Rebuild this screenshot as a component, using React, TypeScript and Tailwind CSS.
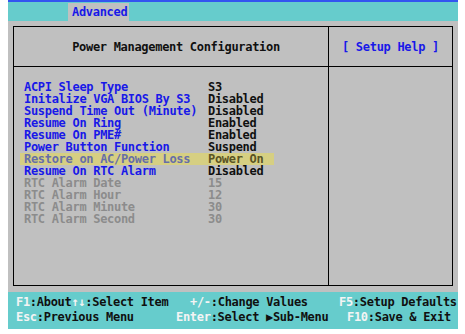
const items = [
  { label: 'ACPI Sleep Type', value: 'S3', kind: 'normal' },
  { label: 'Initalize VGA BIOS By S3', value: 'Disabled', kind: 'normal' },
  { label: 'Suspend Time Out (Minute)', value: 'Disabled', kind: 'normal' },
  { label: 'Resume On Ring', value: 'Enabled', kind: 'normal' },
  { label: 'Resume On PME#', value: 'Enabled', kind: 'normal' },
  { label: 'Power Button Function', value: 'Suspend', kind: 'normal' },
  { label: 'Restore on AC/Power Loss', value: 'Power On', kind: 'selected' },
  { label: 'Resume On RTC Alarm', value: 'Disabled', kind: 'normal' },
  { label: 'RTC Alarm Date', value: '15', kind: 'disabled' },
  { label: 'RTC Alarm Hour', value: '12', kind: 'disabled' },
  { label: 'RTC Alarm Minute', value: '30', kind: 'disabled' },
  { label: 'RTC Alarm Second', value: '30', kind: 'disabled' },
];

function Row({ label, value, kind }: { label: string; value: string; kind: string }) {
  const rowBg = kind === 'selected' ? 'bg-[#d6cf82]' : '';
  const labelColor =
    kind === 'selected' ? 'text-[#666ea8]' : kind === 'disabled' ? 'text-[#8c8c8c]' : 'text-[#1818e8]';
  const valueColor =
    kind === 'selected' ? 'text-[#5a5424]' : kind === 'disabled' ? 'text-[#8c8c8c]' : 'text-[#101010]';
  return (
    <div className={`ml-[6px] w-[254px] h-[12px] leading-[12px] pl-[4px] flex ${rowBg}`}>
      <span className={`w-[184px] shrink-0 ${labelColor}`}>{label}</span>
      <span className={valueColor}>{value}</span>
    </div>
  );
}

function Key({ children }: { children: React.ReactNode }) {
  return <span className="text-[#f4f4f4]">{children}</span>;
}

export default function App() {
  return (
    <div className="w-[465px] h-[334px] bg-white pl-2 pr-[7px] flex flex-col font-['DejaVu_Sans_Mono',monospace] font-bold text-[12px] tracking-[-0.3px] whitespace-pre overflow-hidden">
      <div className="h-[2px] bg-[#3355f0]" />
      <div className="h-[19px] bg-[#66cccc] flex pl-[60px] pt-px">
        <div className="w-[61px] bg-[#c0c0c0] text-[#1818e8] flex items-center pl-[4px]">Advanced</div>
      </div>

      <div className="h-[271px] bg-[#c0c0c0] px-[5px] pt-[5px] pb-[6px]">
        <div className="h-[260px] border border-black grid grid-cols-[315px_1fr]">
          <div className="border-r border-black flex flex-col">
            <div className="h-[40px] border-b border-black flex items-center justify-center pl-[10px] text-[#101010]">
              Power Management Configuration
            </div>
            <div className="pt-[14px] flex flex-col">
              {items.map((it) => (
                <Row key={it.label} {...it} />
              ))}
            </div>
          </div>
          <div className="flex flex-col">
            <div className="h-[40px] border-b border-black flex items-center justify-center text-[#1818e8]">
              [ Setup Help ]
            </div>
          </div>
        </div>
      </div>

      <div className="h-[37px] bg-[#66cccc] px-2 pt-[3px] text-[#101010] leading-[15px]">
        <div className="flex">
          <span className="w-[174px] shrink-0">
            <Key>F1</Key>:About<Key>↑↓</Key>:Select Item
          </span>
          <span className="w-[149px] shrink-0">
            <Key>+/-</Key>:Change Values
          </span>
          <span>
            <Key>F5</Key>:Setup Defaults
          </span>
        </div>
        <div className="flex">
          <span className="w-[160px] shrink-0">
            <Key>Esc</Key>:Previous Menu
          </span>
          <span className="w-[171px] shrink-0">
            <Key>Enter</Key>:Select ▶Sub-Menu
          </span>
          <span>
            <Key>F10</Key>:Save &amp; Exit
          </span>
        </div>
      </div>
      <div className="h-[5px]" />
    </div>
  );
}
